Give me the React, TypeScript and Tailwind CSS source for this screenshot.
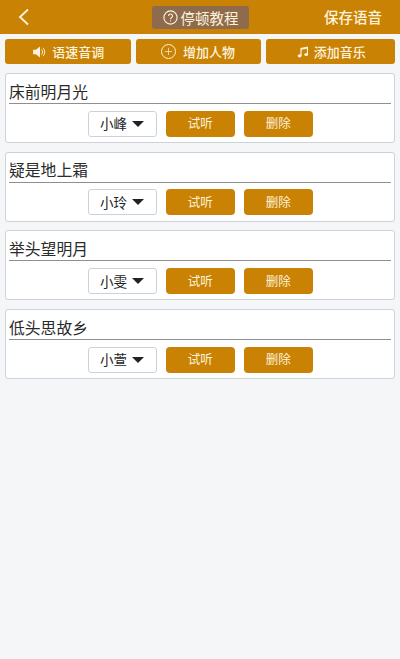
import { Plus } from "lucide-react";

const FONT = "font-['Noto_Sans_CJK_SC','Noto_Sans',sans-serif]";

const LINES = [
  { text: "床前明月光", voice: "小峰" },
  { text: "疑是地上霜", voice: "小玲" },
  { text: "举头望明月", voice: "小雯" },
  { text: "低头思故乡", voice: "小萱" },
];

function SpeakerIcon() {
  return (
    <svg className="translate-x-[2px]" width="14" height="12" viewBox="0 0 15 13" fill="none">
      <path d="M0 4h3l4.5-3.5v12L3 9H0z" fill="#fdf3dc" />
      <path d="M9.5 4a3.5 3.5 0 0 1 0 5M11 2.2a6 6 0 0 1 0 8.6" stroke="#fdf3dc" strokeWidth="1" strokeLinecap="round" />
    </svg>
  );
}

function NoteIcon() {
  return (
    <svg className="translate-x-[2px]" width="12" height="12" viewBox="0 0 12 12" fill="#fdf3dc">
      <path d="M3.4 2 11 .5v1.9L4.6 3.7v6H3.4z" />
      <path d="M9.9 1.5H11v6.7H9.9z" />
      <ellipse cx="2.6" cy="9.8" rx="2" ry="1.6" />
      <ellipse cx="9.2" cy="8.4" rx="1.9" ry="1.5" />
    </svg>
  );
}

function ToolButton({ icon, label, className }: { icon: React.ReactNode; label: string; className: string }) {
  return (
    <button className={`flex h-[25px] items-center justify-center gap-[7px] rounded-[3px] bg-[#ca8204] text-[13px] font-medium text-[#fdf3dc] ${className}`}>
      {icon}
      {label}
    </button>
  );
}

function LineCard({ text, voice }: { text: string; voice: string }) {
  return (
    <div className="h-[70px] rounded-[3px] border-[1.5px] border-[#cdd1d9] bg-white px-[3px]">
      <div className="h-[30px] border-b-[1.5px] border-[#8f8f8f] pt-[5.5px] text-[15.8px] leading-[24px] text-[#2a2a2a]">
        {text}
      </div>
      <div className="mt-[6.5px] flex justify-center gap-[9.5px]">
        <div className="flex h-[26px] w-[69px] items-center justify-center gap-[5px] rounded-[3px] border-[1.5px] border-[#cdd1d9] text-[13.5px] text-[#222]">
          {voice}
          <span className="h-0 w-0 border-x-[6.5px] border-t-[6.5px] border-x-transparent border-t-[#222]" />
        </div>
        <button className="h-[26px] w-[68.5px] rounded-[4px] bg-[#ca8204] text-[12.5px] text-[#fdf3dc]">试听</button>
        <button className="h-[26px] w-[68.5px] rounded-[4px] bg-[#ca8204] text-[12.5px] text-[#fdf3dc]">删除</button>
      </div>
    </div>
  );
}

export default function App() {
  return (
    <div className={`h-[659px] w-[400px] overflow-hidden bg-[#f5f6f8] ${FONT}`}>
      <header className="relative flex h-[34px] items-center justify-between bg-[#ca8204] pl-[18px] pr-[18px]">
        <svg width="12" height="18" viewBox="0 0 12 18" fill="none">
          <path d="M10 1.5 2 9l8 7.5" stroke="#fdf3dc" strokeWidth="1.8" />
        </svg>
        <div className="absolute left-[152px] top-[6px] flex h-[23px] w-[97px] items-center justify-center gap-[3px] rounded-[3px] bg-[#8f6b4e] text-[14.5px] text-[#fdf3dc]">
          <svg width="15" height="15" viewBox="0 0 15 15" fill="none" stroke="#fdf3dc" strokeWidth="1.1">
            <circle cx="7.5" cy="7.5" r="6.6" />
            <path d="M5.5 6a2 2 0 1 1 3 1.7c-.7.4-1 .8-1 1.5" />
            <path d="M7.5 10.4v1.1" />
          </svg>
          停顿教程
        </div>
        <span className="text-[14.5px] font-medium text-[#fdf3dc]">保存语音</span>
      </header>

      <div className="flex gap-[5px] px-[5px] pt-[5px]">
        <ToolButton icon={<SpeakerIcon />} label="语速音调" className="w-[125.5px]" />
        <ToolButton
          icon={
            <span className="flex h-[15px] w-[15px] items-center justify-center rounded-full border border-[#fdf3dc]">
              <Plus size={11} strokeWidth={1.5} />
            </span>
          }
          label="增加人物"
          className="w-[125px]"
        />
        <ToolButton icon={<NoteIcon />} label="添加音乐" className="flex-1" />
      </div>

      <div className="flex flex-col gap-[8.7px] px-[5px] pt-[9px]">
        {LINES.map((l) => (
          <LineCard key={l.text} text={l.text} voice={l.voice} />
        ))}
      </div>
    </div>
  );
}
